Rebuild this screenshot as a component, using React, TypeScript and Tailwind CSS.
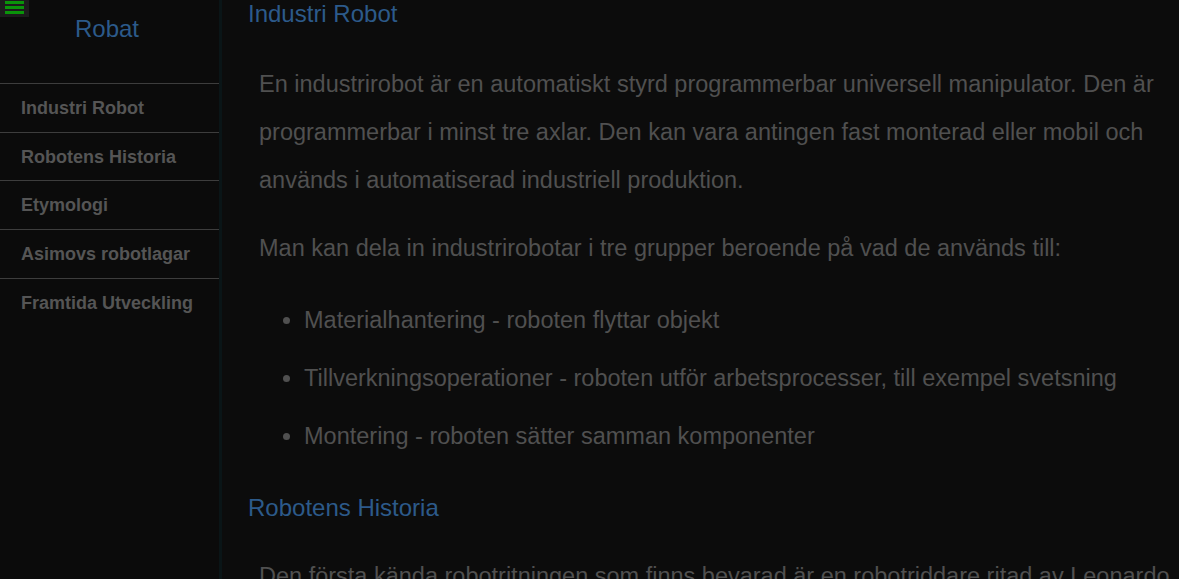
import React from 'react';

const navItems = ['Industri Robot', 'Robotens Historia', 'Etymologi', 'Asimovs robotlagar', 'Framtida Utveckling'];

const bullets = [
  'Materialhantering - roboten flyttar objekt',
  'Tillverkningsoperationer - roboten utför arbetsprocesser, till exempel svetsning',
  'Montering - roboten sätter samman komponenter',
];

export default function App() {
  return (
    <div className="flex h-[579px] w-full overflow-hidden bg-[#0c0c0c] font-['Liberation_Sans',Arial,sans-serif]">
      {/* Sidebar */}
      <aside className="relative w-[222px] shrink-0 border-r-[3px] border-[#0a1517] bg-[#0b0b0b]">
        <button className="absolute top-0 left-0 flex h-[17px] w-[29px] flex-col items-center gap-[2px] bg-[#1c1c1c] pt-[1px]">
          <span className="block h-[3px] w-[19px] bg-[#0a940a]" />
          <span className="block h-[3px] w-[19px] bg-[#0a940a]" />
          <span className="block h-[3px] w-[19px] bg-[#0a940a]" />
        </button>
        <div className="flex h-[83px] items-start justify-center pt-[15px] pr-[5px]">
          <h1 className="text-[24px] leading-[28px] text-[#2c5a8a]">Robat</h1>
        </div>
        <nav className="flex flex-col">
          {navItems.map((item) => (
            <a
              key={item}
              href="#"
              className="block h-[48.7px] border-t border-[#3d3d3d] pl-[21px] pt-[13px] text-[18px] leading-[22px] font-bold text-[#555]"
            >
              {item}
            </a>
          ))}
        </nav>
      </aside>

      {/* Main content */}
      <main className="flex-1 pl-[26px]">
        <h2 className="text-[24px] leading-[28px] text-[#2c5a8a]">Industri Robot</h2>
        <div className="mt-[32px] pl-[11px] text-[23.5px] leading-[48px] text-[#505050]">
          <p>
            En industrirobot är en automatiskt styrd programmerbar universell manipulator. Den är programmerbar i
            minst tre axlar. Den kan vara antingen fast monterad eller mobil och används i automatiserad industriell
            produktion.
          </p>
          <p className="mt-[20px]">Man kan dela in industrirobotar i tre grupper beroende på vad de används till:</p>
          <ul className="mt-[24px] flex list-disc flex-col gap-[10px] pl-[45px] marker:text-[#505050]">
            {bullets.map((b) => (
              <li key={b}>{b}</li>
            ))}
          </ul>
        </div>
        <h2 className="mt-[34px] text-[24px] leading-[28px] text-[#2c5a8a]">Robotens Historia</h2>
        <div className="mt-[30px] pl-[11px] text-[23.5px] leading-[48px] text-[#505050]">
          <p>
            Den första kända robotritningen som finns bevarad är en robotriddare ritad av Leonardo da Vinci omkring
            år 1495.
          </p>
        </div>
      </main>
    </div>
  );
}
